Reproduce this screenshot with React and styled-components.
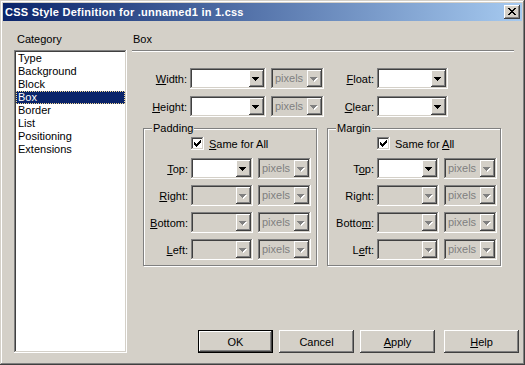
import React from 'react';
import styled, { createGlobalStyle, css } from 'styled-components';

const GlobalStyle = createGlobalStyle`
  html, body {
    margin: 0;
    padding: 0;
    background: #d4d0c8;
  }
  body {
    font-family: "Liberation Sans", Arial, sans-serif;
    font-size: 11px;
    color: #000;
  }
`;

const raised = css`
  box-shadow: inset -1px -1px #404040, inset 1px 1px #fff, inset -2px -2px #808080, inset 2px 2px #d4d0c8;
`;

const sunken = css`
  box-shadow: inset -1px -1px #fff, inset 1px 1px #808080, inset -2px -2px #d4d0c8, inset 2px 2px #404040;
`;

const Window = styled.div`
  width: 525px;
  height: 365px;
  box-sizing: border-box;
  padding: 3px;
  background: #d4d0c8;
  box-shadow: inset -1px -1px #404040, inset 1px 1px #d4d0c8, inset -2px -2px #808080, inset 2px 2px #fff;
  display: flex;
  flex-direction: column;
`;

const TitleBar = styled.div`
  height: 18px;
  flex: none;
  display: flex;
  align-items: center;
  padding: 0 2px;
  background: linear-gradient(to right, #0a246a, #a6caf0);
  color: #fff;
  font-weight: bold;
  letter-spacing: 0.25px;
`;

const Title = styled.div`
  flex: 1;
  white-space: nowrap;
`;

const CloseButton = styled.div`
  width: 16px;
  height: 14px;
  box-sizing: border-box;
  background: #d4d0c8;
  ${raised};
  display: flex;
  align-items: center;
  justify-content: center;
  padding: 0 1px 1px 0;
`;

const Body = styled.div`
  flex: 1;
  display: flex;
  padding: 12px 3px 9px 11px;
  min-height: 0;
`;

const LeftCol = styled.div`
  width: 113px;
  display: flex;
  flex-direction: column;
`;

const Caption = styled.div`
  line-height: 13px;
  padding-left: ${p => p.$indent || 0}px;
`;

const ListBox = styled.div`
  flex: 1;
  margin-top: 4px;
  box-sizing: border-box;
  padding: 2px;
  background: #fff;
  ${sunken};
`;

const ListItem = styled.div`
  height: 13px;
  line-height: 13px;
  padding-left: 2px;
  ${p => p.$selected && css`
    background: #0a246a;
    color: #fff;
    outline: 1px dotted #f5db95;
    outline-offset: -1px;
  `}
`;

const RightCol = styled.div`
  width: 387px;
  margin-left: 5px;
  display: flex;
  flex-direction: column;
`;

const Rule = styled.div`
  width: 382px;
  height: 0;
  margin-top: 4px;
  border-top: 1px solid #808080;
  border-bottom: 1px solid #fff;
`;

const FieldRows = styled.div`
  margin-top: 16px;
  display: flex;
  flex-direction: column;
  gap: 7px;
`;

const Row = styled.div`
  display: flex;
  align-items: center;
  height: 21px;
`;

const Label = styled.div`
  width: ${p => p.$w}px;
  flex: none;
  box-sizing: border-box;
  padding-right: 3px;
  text-align: right;
  white-space: nowrap;
`;

const Combo = styled.div`
  width: ${p => p.$w}px;
  height: 21px;
  flex: none;
  box-sizing: border-box;
  padding: 2px;
  margin-left: ${p => p.$gap || 0}px;
  display: flex;
  background: ${p => (p.$disabled ? '#d4d0c8' : '#fff')};
  ${sunken};
`;

const ComboText = styled.div`
  flex: 1;
  padding-left: 2px;
  line-height: 17px;
  color: #808080;
  overflow: hidden;
`;

const DropButton = styled.div`
  width: 15px;
  height: 17px;
  flex: none;
  box-sizing: border-box;
  background: #d4d0c8;
  ${raised};
  display: flex;
  align-items: center;
  justify-content: center;
  padding: 1px 1px 0 0;
`;

const Groups = styled.div`
  display: flex;
  gap: 10px;
  margin: 11px 0 0 11px;
`;

const Group = styled.div`
  position: relative;
  width: 174px;
  box-sizing: border-box;
  border: 1px solid #808080;
  box-shadow: 1px 1px 0 #fff, inset 1px 1px 0 #fff;
  padding: 8px 0 5px;
  display: flex;
  flex-direction: column;
  gap: 6px;
`;

const Legend = styled.span`
  position: absolute;
  top: -7px;
  left: 8px;
  padding: 0 1px;
  line-height: 13px;
  background: #d4d0c8;
`;

const CheckRow = styled.div`
  display: flex;
  align-items: center;
  gap: 5px;
  height: 13px;
  padding-left: ${p => p.$indent}px;
  margin-bottom: 2px;
`;

const CheckBox = styled.div`
  width: 13px;
  height: 13px;
  box-sizing: border-box;
  background: #fff;
  ${sunken};
  display: flex;
  align-items: center;
  justify-content: center;
`;

const ButtonRow = styled.div`
  margin-top: auto;
  display: flex;
  justify-content: flex-end;
  gap: 6px;
`;

const Button = styled.div`
  width: 75px;
  height: 23px;
  box-sizing: border-box;
  display: flex;
  align-items: center;
  justify-content: center;
  background: #d4d0c8;
  margin-left: ${p => p.$gap || 0}px;
  ${p =>
    p.$default
      ? css`
          border: 1px solid #000;
          box-shadow: inset -1px -1px #404040, inset 1px 1px #fff, inset -2px -2px #808080;
        `
      : raised};
`;

const Arrow = ({ disabled }) => (
  <svg width="8" height="5" viewBox="0 0 8 5" shapeRendering="crispEdges">
    {disabled && (
      <g fill="#fff">
        <rect x="1" y="1" width="7" height="1" />
        <rect x="2" y="2" width="5" height="1" />
        <rect x="3" y="3" width="3" height="1" />
        <rect x="4" y="4" width="1" height="1" />
      </g>
    )}
    <g fill={disabled ? '#808080' : '#000'}>
      <rect x="0" y="0" width="7" height="1" />
      <rect x="1" y="1" width="5" height="1" />
      <rect x="2" y="2" width="3" height="1" />
      <rect x="3" y="3" width="1" height="1" />
    </g>
  </svg>
);

const CloseGlyph = () => (
  <svg width="8" height="7" viewBox="0 0 8 7" shapeRendering="crispEdges" fill="#000">
    <rect x="0" y="0" width="2" height="1" />
    <rect x="6" y="0" width="2" height="1" />
    <rect x="1" y="1" width="2" height="1" />
    <rect x="5" y="1" width="2" height="1" />
    <rect x="2" y="2" width="4" height="1" />
    <rect x="3" y="3" width="2" height="1" />
    <rect x="2" y="4" width="4" height="1" />
    <rect x="1" y="5" width="2" height="1" />
    <rect x="5" y="5" width="2" height="1" />
    <rect x="0" y="6" width="2" height="1" />
    <rect x="6" y="6" width="2" height="1" />
  </svg>
);

const CheckGlyph = () => (
  <svg width="7" height="7" viewBox="0 0 7 7" shapeRendering="crispEdges" fill="#000">
    <rect x="6" y="0" width="1" height="1" />
    <rect x="5" y="1" width="2" height="1" />
    <rect x="0" y="2" width="1" height="1" />
    <rect x="4" y="2" width="3" height="1" />
    <rect x="0" y="3" width="2" height="1" />
    <rect x="3" y="3" width="3" height="1" />
    <rect x="0" y="4" width="5" height="1" />
    <rect x="1" y="5" width="3" height="1" />
    <rect x="2" y="6" width="1" height="1" />
  </svg>
);

const Select = ({ w, gap, disabled, value }) => (
  <Combo $w={w} $gap={gap} $disabled={disabled}>
    <ComboText>{value}</ComboText>
    <DropButton>
      <Arrow disabled={disabled} />
    </DropButton>
  </Combo>
);

const categories = ['Type', 'Background', 'Block', 'Box', 'Border', 'List', 'Positioning', 'Extensions'];

const SideBox = ({ title, indent, labels, topEnabled, sameLabel }) => (
  <Group>
    <Legend>{title}</Legend>
    <CheckRow $indent={indent}>
      <CheckBox>
        <CheckGlyph />
      </CheckBox>
      <span>{sameLabel}</span>
    </CheckRow>
    {labels.map((label, i) => (
      <Row key={i}>
        <Label $w={indent}>{label}</Label>
        <Select w={62} disabled={!(topEnabled && i === 0)} />
        <Select w={53} gap={5} disabled value="pixels" />
      </Row>
    ))}
  </Group>
);

export default function App() {
  return (
    <>
      <GlobalStyle />
      <Window>
        <TitleBar>
          <Title>CSS Style Definition for .unnamed1 in 1.css</Title>
          <CloseButton>
            <CloseGlyph />
          </CloseButton>
        </TitleBar>
        <Body>
          <LeftCol>
            <Caption $indent={3}>Category</Caption>
            <ListBox>
              {categories.map(c => (
                <ListItem key={c} $selected={c === 'Box'}>
                  {c}
                </ListItem>
              ))}
            </ListBox>
          </LeftCol>
          <RightCol>
            <Caption $indent={1}>Box</Caption>
            <Rule />
            <FieldRows>
              <Row>
                <Label $w={58}><u>W</u>idth:</Label>
                <Select w={76} />
                <Select w={53} gap={5} disabled value="pixels" />
                <Label $w={53}><u>F</u>loat:</Label>
                <Select w={71} />
              </Row>
              <Row>
                <Label $w={58}><u>H</u>eight:</Label>
                <Select w={76} />
                <Select w={53} gap={5} disabled value="pixels" />
                <Label $w={53}><u>C</u>lear:</Label>
                <Select w={71} />
              </Row>
            </FieldRows>
            <Groups>
              <SideBox
                title="Padding"
                indent={47}
                topEnabled
                sameLabel={<><u>S</u>ame for All</>}
                labels={[
                  <><u>T</u>op:</>,
                  <><u>R</u>ight:</>,
                  <><u>B</u>ottom:</>,
                  <><u>L</u>eft:</>,
                ]}
              />
              <SideBox
                title="Margin"
                indent={49}
                topEnabled
                sameLabel={<>Same for <u>A</u>ll</>}
                labels={[
                  <>T<u>o</u>p:</>,
                  <>Right:</>,
                  <>Botto<u>m</u>:</>,
                  <>L<u>e</u>ft:</>,
                ]}
              />
            </Groups>
            <ButtonRow>
              <Button $default>OK</Button>
              <Button>Cancel</Button>
              <Button><span><u>A</u>pply</span></Button>
              <Button $gap={3}><span><u>H</u>elp</span></Button>
            </ButtonRow>
          </RightCol>
        </Body>
      </Window>
    </>
  );
}
